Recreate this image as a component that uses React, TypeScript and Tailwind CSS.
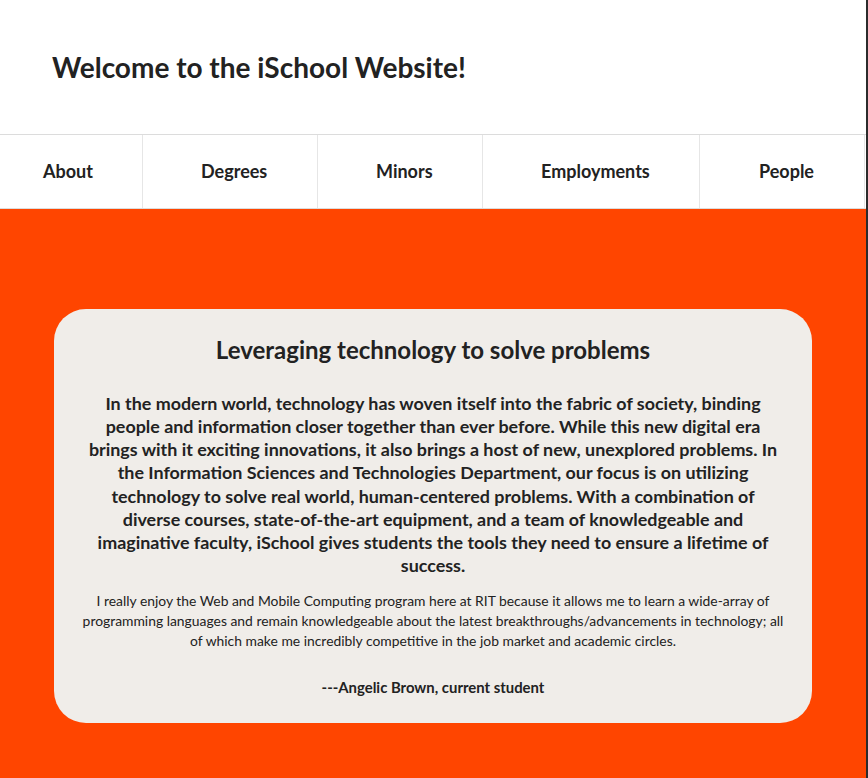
import React from "react";

const navItems = [
  { label: "About", w: "w-[143px]", pl: "pl-[43px]" },
  { label: "Degrees", w: "w-[175px]", pl: "pl-[58px]" },
  { label: "Minors", w: "w-[165px]", pl: "pl-[58px]" },
  { label: "Employments", w: "w-[217px]", pl: "pl-[58px]" },
  { label: "People", w: "w-[165px]", pl: "pl-[59px]" },
];

export default function App() {
  return (
    <div className="flex min-h-[778px] w-[868px] text-[#222]" style={{ fontFamily: "Lato, 'Noto Sans', sans-serif" }}>
      <div className="flex w-[866px] flex-col bg-white">
        <header className="flex h-[134px] items-center pl-[52px]">
          <h1 className="text-[28px] font-bold leading-none">Welcome to the iSchool Website!</h1>
        </header>
        <nav className="flex h-[75px] border-y border-[#dcdcdc]">
          {navItems.map((n) => (
            <div
              key={n.label}
              className={`flex items-center border-r border-[#e6e6e6] ${n.w} ${n.pl} text-[18px] font-bold`}
            >
              {n.label}
            </div>
          ))}
        </nav>
        <main className="flex-1 bg-[#ff4500] px-[54px] pt-[100px] pb-[56px]">
          <section className="rounded-[32px] bg-[#f0ede9] px-[26px] pt-[26px] pb-[26px] text-center">
            <h2 className="text-[24px] font-bold leading-[30px]">Leveraging technology to solve problems</h2>
            <p className="mt-[27px] px-[6px] text-[17.9px] font-bold leading-[23.14px]">
              In the modern world, technology has woven itself into the fabric of society, binding people and information closer together than ever before. While this new digital era brings with it exciting innovations, it also brings a host of new, unexplored problems. In the Information Sciences and Technologies Department, our focus is on utilizing technology to solve real world, human-centered problems. With a combination of diverse courses, state-of-the-art equipment, and a team of knowledgeable and imaginative faculty, iSchool gives students the tools they need to ensure a lifetime of success.
            </p>
            <p className="mt-[14px] text-[13.88px] leading-[20px]">
              I really enjoy the Web and Mobile Computing program here at RIT because it allows me to learn a wide-array of programming languages and remain knowledgeable about the latest breakthroughs/advancements in technology; all of which make me incredibly competitive in the job market and academic circles.
            </p>
            <p className="mt-[26px] text-[14.9px] font-bold leading-[20px]">---Angelic Brown, current student</p>
          </section>
        </main>
      </div>
      <div className="w-[2px] bg-[#2b2b2b]" />
    </div>
  );
}
